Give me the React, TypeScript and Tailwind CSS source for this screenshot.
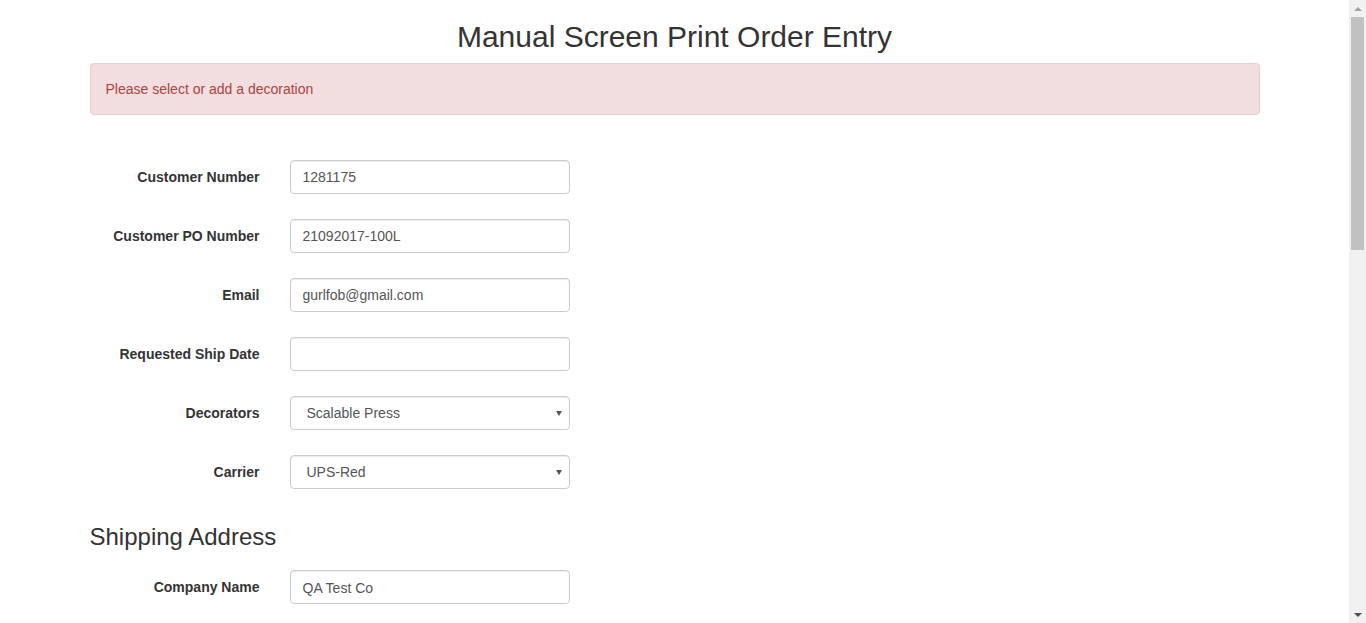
import { ReactNode } from 'react';

type Field = {
  label: string;
  value?: string;
  kind?: 'input' | 'select';
};

const orderFields: Field[] = [
  { label: 'Customer Number', value: '1281175' },
  { label: 'Customer PO Number', value: '21092017-100L' },
  { label: 'Email', value: 'gurlfob@gmail.com' },
  { label: 'Requested Ship Date', value: '' },
  { label: 'Decorators', value: 'Scalable Press', kind: 'select' },
  { label: 'Carrier', value: 'UPS-Red', kind: 'select' },
];

const shippingFields: Field[] = [
  { label: 'Company Name', value: 'QA Test Co' },
  { label: 'Attention', value: 'Receiving' },
  { label: 'Address 1', value: '123 Main Street' },
  { label: 'Address 2', value: '' },
  { label: 'City', value: 'Philadelphia' },
  { label: 'State', value: 'PA', kind: 'select' },
  { label: 'Zip Code', value: '19103' },
  { label: 'Country', value: 'United States', kind: 'select' },
  { label: 'Phone', value: '215-555-0100' },
];

const decorationFields: Field[] = [
  { label: 'Decoration', value: '-- Select --', kind: 'select' },
  { label: 'Location', value: 'Front', kind: 'select' },
  { label: 'Ink Colors', value: '' },
  { label: 'Notes', value: '' },
];

function FormRow({ field }: { field: Field }) {
  return (
    <div className="flex items-start gap-[30px] mb-[25px]">
      <label className="w-[170px] pt-[7px] text-right font-bold text-[14px] leading-5 text-[#333]">
        {field.label}
      </label>
      {field.kind === 'select' ? (
        <div className="relative w-[280px]">
          <select
            defaultValue={field.value}
            className="w-full h-[34px] appearance-none rounded border border-[#ccc] bg-white pl-[16px] pr-6 pt-[2px] text-[14px] text-[#555] shadow-[inset_0_1px_1px_rgba(0,0,0,0.075)]"
          >
            <option>{field.value}</option>
          </select>
          <span className="pointer-events-none absolute right-[8px] top-[15px] h-0 w-0 border-x-[3px] border-t-[5px] border-x-transparent border-t-[#555]" />
        </div>
      ) : (
        <input
          type="text"
          defaultValue={field.value}
          className="w-[280px] h-[34px] rounded border border-[#ccc] bg-white px-3 pt-[1px] text-[14px] text-[#555] shadow-[inset_0_1px_1px_rgba(0,0,0,0.075)] outline-none"
        />
      )}
    </div>
  );
}

function SectionTitle({ children }: { children: ReactNode }) {
  return <h3 className="mt-[35px] mb-5 text-[24px] leading-[1.1] font-normal text-[#333]">{children}</h3>;
}

// mimics the browser's vertical scrollbar seen in the capture
function ScrollBar() {
  return (
    <div className="w-[17px] h-full flex flex-col items-center bg-[#f1f1f1]">
      <div className="h-[17px] w-full flex items-center justify-center">
        <span className="h-0 w-0 border-x-[4px] border-b-[4px] border-x-transparent border-b-[#a3a3a3]" />
      </div>
      <div className="w-[13px] h-[233px] bg-[#c1c1c1]" />
      <div className="flex-1" />
      <div className="h-[17px] w-full flex items-center justify-center">
        <span className="h-0 w-0 border-x-[4px] border-t-[4px] border-x-transparent border-t-[#505050]" />
      </div>
    </div>
  );
}

export default function App() {
  return (
    <div className="flex h-[623px] overflow-hidden bg-white font-['Liberation_Sans',Arial,sans-serif] text-[14px] leading-[1.42857] text-[#333]">
      <div className="flex-1 overflow-hidden">
        <div className="w-[1170px] mx-auto pb-[100px]">
          <h2 className="mt-5 mb-[10px] text-center text-[30px] leading-[1.1] font-normal">
            Manual Screen Print Order Entry
          </h2>

          {/* Validation message */}
          <div className="mb-5 rounded border border-[#ebccd1] bg-[#f2dede] px-[15px] pt-[16px] pb-[14px] text-[#a94442]">
            Please select or add a decoration
          </div>

          <form className="pt-[25px]">
            {orderFields.map(f => (
              <FormRow key={f.label} field={f} />
            ))}

            <SectionTitle>Shipping Address</SectionTitle>
            {shippingFields.map(f => (
              <FormRow key={f.label} field={f} />
            ))}

            <SectionTitle>Decoration</SectionTitle>
            {decorationFields.map(f => (
              <FormRow key={f.label} field={f} />
            ))}

            <div className="flex gap-[30px]">
              <div className="w-[170px]" />
              <button
                type="button"
                className="h-[34px] rounded border border-[#2e6da4] bg-[#337ab7] px-3 text-[14px] text-white"
              >
                Submit Order
              </button>
            </div>
          </form>
        </div>
      </div>
      <ScrollBar />
    </div>
  );
}
